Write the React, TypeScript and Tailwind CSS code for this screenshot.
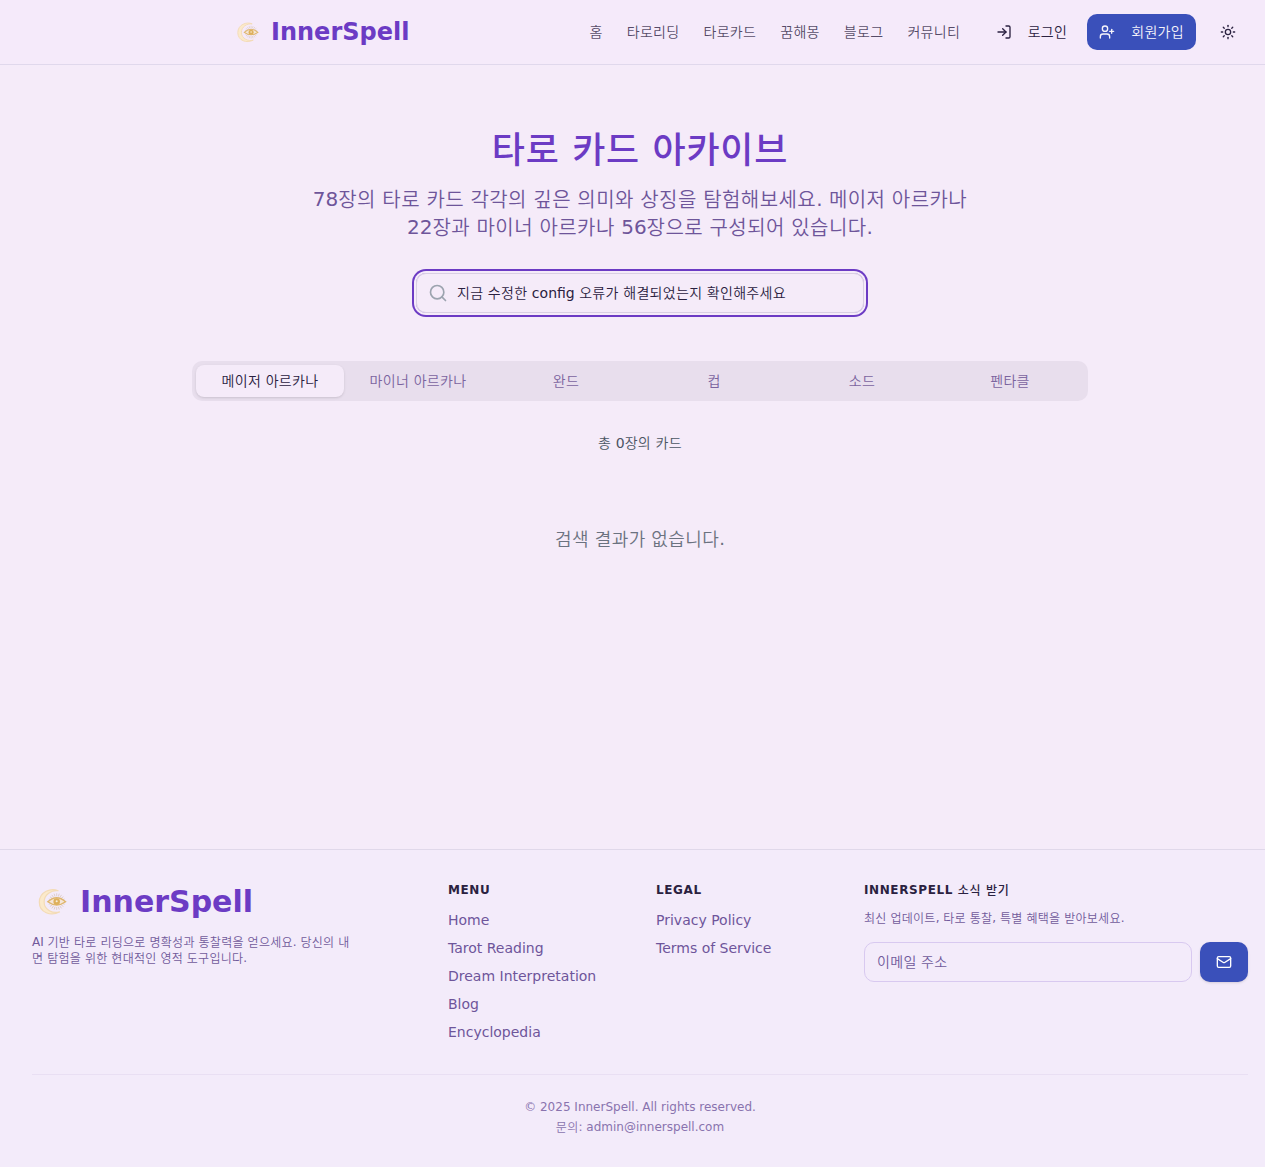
import React from 'react';
import { LogIn, UserPlus, Sun, Search, Mail } from 'lucide-react';

function MoonEye({ className }: { className: string }) {
  const rays = Array.from({ length: 20 }, (_, i) => (i * 360) / 20);
  return (
    <svg viewBox="0 0 32 32" className={className} fill="none">
      <path d="M22.5 4C15 0.5 2.5 5 2.5 16.2S15 31.5 24 26.6C17 28.6 7.6 24.5 7.6 16S15.5 3.4 22.5 4Z" fill="#fbeacb" stroke="#f3dbb6" strokeWidth="1.3" strokeLinejoin="round" />
      <g stroke="#d9c7bd" strokeWidth="0.8">
        {rays.map((r) => (
          <path key={r} d="M21 9.9V6.7" transform={`rotate(${r} 21 15.6)`} />
        ))}
      </g>
      <path d="M11.5 15.8Q21 7.2 30.5 15.8Q21 22.6 11.5 15.8Z" fill="#f5e6d8" stroke="#dfb66c" strokeWidth="1.4" />
      <circle cx="21" cy="15.6" r="3.5" fill="#deb05c" />
      <circle cx="21" cy="15.2" r="1.1" fill="#f8edda" />
    </svg>
  );
}

const nav = ['홈', '타로리딩', '타로카드', '꿈해몽', '블로그', '커뮤니티'];
const tabs = ['메이저 아르카나', '마이너 아르카나', '완드', '컵', '소드', '펜타클'];
const menu = ['Home', 'Tarot Reading', 'Dream Interpretation', 'Blog', 'Encyclopedia'];
const legal = ['Privacy Policy', 'Terms of Service'];

const hangul = {
  base: 'leading-none font-[350] tracking-[0.022em]',
  lowered: 'align-[-1px] leading-none font-[350] tracking-[0.022em]',
  title: 'align-[-2px] leading-none font-medium tracking-[0.022em]',
  heading: 'align-[-1px] leading-none font-medium tracking-[0.06em]',
};

/** Sets Hangul runs lighter and slightly wider than the surrounding Latin text. */
function Ko({ children, kind = 'base' }: { children: string; kind?: keyof typeof hangul }) {
  return (
    <>
      {children.split(/([가-힣]+)/).map((part, i) =>
        i % 2 ? <span key={i} className={hangul[kind]}>{part}</span> : part,
      )}
    </>
  );
}

function LinkColumn({ title, items }: { title: string; items: string[] }) {
  return (
    <div>
      <h3 className="text-xs leading-4 font-semibold uppercase tracking-wider text-[#2a2140]">{title}</h3>
      <ul className="mt-3 space-y-2">
        {items.map((item) => (
          <li key={item} className="text-sm">
            <a href="#">{item}</a>
          </li>
        ))}
      </ul>
    </div>
  );
}

export default function App() {
  return (
    <div className="h-[1167px] w-full overflow-hidden bg-[#f5ebf9] font-['DejaVu_Sans','Noto_Sans_CJK_KR',sans-serif] text-[#2a2140]">
      <div className="flex h-full w-[1280px] flex-col">
        <header className="h-[65px] border-b border-[#e0d8ec] bg-[#f5eafa] backdrop-blur">
          <div className="flex h-16 items-center pl-[232px] pr-[36px]">
            <a href="#" className="flex items-center gap-2">
              <MoonEye className="h-[31px] w-[31px] p-[4px]" />
              <span className="text-2xl font-bold text-[#6c3bc4]">InnerSpell</span>
            </a>
            <nav className="ml-auto flex items-center gap-6 text-sm font-medium text-[#2a2140]/80">
              {nav.map((n) => (
                <a key={n} href="#"><Ko>{n}</Ko></a>
              ))}
            </nav>
            <div className="ml-[23.5px] flex items-center gap-2 text-sm font-medium">
              <button className="flex h-9 items-center gap-4 px-3">
                <LogIn size={16} />
                <span><Ko>로그인</Ko></span>
              </button>
              <button className="flex h-9 items-center gap-4 rounded-[10px] bg-[#3a50ba] px-3 text-[#f5f3fa]">
                <UserPlus size={16} />
                <span><Ko>회원가입</Ko></span>
              </button>
              <button className="ml-2 flex size-8 items-center justify-center">
                <Sun size={16} />
              </button>
            </div>
          </div>
        </header>

        <main className="flex flex-1 flex-col items-center pt-[64px]">
          <h1 className="h-10 text-4xl leading-10 font-bold text-[#6c3bc4]"><Ko kind="title">타로 카드 아카이브</Ko></h1>
          <p className="mt-4 h-14 w-[672px] text-center text-xl leading-7 text-[#6e559a]">
            <Ko kind="lowered">78장의 타로 카드 각각의 깊은 의미와 상징을 탐험해보세요. 메이저 아르카나</Ko>
            <br />
            <Ko kind="lowered">22장과 마이너 아르카나 56장으로 구성되어 있습니다.</Ko>
          </p>
          <div className="mt-8 flex h-10 w-[448px] items-center rounded-[10px] border border-[#d9cfe3] px-[11px] ring-2 ring-[#6c3bc4] ring-offset-2 ring-offset-[#f5ebf9]">
            <Search size={20} className="text-[#9ca3af]" />
            <span className="ml-[9px] text-sm"><Ko>지금 수정한 config 오류가 해결되었는지 확인해주세요</Ko></span>
          </div>
          <div className="mt-12 grid h-10 w-[896px] grid-cols-6 rounded-[10px] bg-[#e8deed] p-1 text-sm font-medium text-[#7b649f]">
            {tabs.map((t, i) => (
              <button
                key={t}
                className={i === 0 ? 'rounded-lg bg-[#f5ebf9] text-[#2a2140] shadow-sm' : 'rounded-lg'}
              >
                <Ko>{t}</Ko>
              </button>
            ))}
          </div>
          <p className="mt-8 h-5 text-sm text-[#4b5563]"><Ko>총 0장의 카드</Ko></p>
          <p className="mt-[72px] text-lg text-[#6b7280]"><Ko kind="lowered">검색 결과가 없습니다.</Ko></p>
        </main>

        <footer className="h-[318px] border-t border-[#e0d8ea] bg-[#f3ebfa] px-8 pt-8 text-[#6e559a]">
          <div className="flex h-[192px]">
            <div className="w-[416px]">
              <div className="flex h-10 items-center gap-2">
                <MoonEye className="h-10 w-10 p-[5px]" />
                <span className="text-3xl font-bold text-[#6c3bc4]">InnerSpell</span>
              </div>
              <p className="mt-3 w-[320px] text-xs leading-4 text-[#715a9b]">
                <Ko kind="lowered">AI 기반 타로 리딩으로 명확성과 통찰력을 얻으세요. 당신의 내</Ko>
                <br />
                <Ko kind="lowered">면 탐험을 위한 현대적인 영적 도구입니다.</Ko>
              </p>
            </div>
            <div className="w-[208px]"><LinkColumn title="Menu" items={menu} /></div>
            <div className="w-[208px]"><LinkColumn title="Legal" items={legal} /></div>
            <div className="w-[384px]">
              <h3 className="h-4 text-xs leading-4 font-semibold uppercase tracking-wider text-[#2a2140]">
                <Ko kind="heading">InnerSpell 소식 받기</Ko>
              </h3>
              <p className="mt-3 h-4 text-xs text-[#715a9b]"><Ko kind="lowered">최신 업데이트, 타로 통찰, 특별 혜택을 받아보세요.</Ko></p>
              <div className="mt-4 flex gap-2">
                <div className="flex h-10 flex-1 items-center rounded-[10px] border border-[#d8c9f0] px-3 text-sm text-[#705a9a]">
                  <span><Ko>이메일 주소</Ko></span>
                </div>
                <button className="flex h-10 w-12 items-center justify-center rounded-[10px] bg-[#3a50ba] text-white shadow-sm">
                  <Mail size={16} />
                </button>
              </div>
            </div>
          </div>
          <div className="flex flex-col items-center gap-1 border-t border-[#e9dff3] pt-6 text-xs text-[#8973ae]">
            <p>© 2025 InnerSpell. All rights reserved.</p>
            <p className="h-4"><Ko kind="lowered">문의: admin@innerspell.com</Ko></p>
          </div>
        </footer>
      </div>
    </div>
  );
}
